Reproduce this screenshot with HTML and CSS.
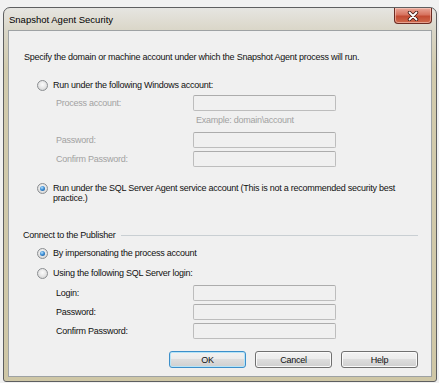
FILE: index.html
```html
<!DOCTYPE html>
<html lang="en">

<head>
    <meta charset="utf-8">
    <title>Snapshot Agent Security</title>
    <link rel="stylesheet" href="styles.css">
</head>

<body>

    <div class="window">
        <div class="titlebar">
            <span class="title">Snapshot Agent Security</span>
            <button class="close" aria-label="Close">
                <svg width="12" height="10" viewBox="0 0 12 10">
                    <path d="M2.5 1.5 L9.5 8.5 M9.5 1.5 L2.5 8.5" stroke="#3b1510" stroke-width="3.4" stroke-linecap="round" />
                    <path d="M2.5 1.5 L9.5 8.5 M9.5 1.5 L2.5 8.5" stroke="#ffffff" stroke-width="1.8" stroke-linecap="round" />
                </svg>
            </button>
        </div>

        <div class="client">
            <p class="intro">Specify the domain or machine account under which the Snapshot Agent process will run.</p>

            <div class="option first">
                <span class="radio"></span>
                <span class="label">Run under the following Windows account:</span>
            </div>

            <div class="fields disabled">
                <span>Process account:</span><span class="box"></span>
                <span class="hint">Example: domain\account</span>
                <span>Password:</span><span class="box"></span>
                <span>Confirm Password:</span><span class="box"></span>
            </div>

            <div class="option wrap">
                <span class="radio on"></span>
                <span class="label">Run under the SQL Server Agent service account (This is not a recommended security best practice.)</span>
            </div>

            <div class="group">
                <span>Connect to the Publisher</span>
                <span class="rule"></span>
            </div>

            <div class="option imp">
                <span class="radio on"></span>
                <span class="label">By impersonating the process account</span>
            </div>

            <div class="option login">
                <span class="radio"></span>
                <span class="label">Using the following SQL Server login:</span>
            </div>

            <div class="fields second">
                <span>Login:</span><span class="box"></span>
                <span>Password:</span><span class="box"></span>
                <span>Confirm Password:</span><span class="box"></span>
            </div>

            <div class="buttons">
                <button class="btn default">OK</button>
                <button class="btn">Cancel</button>
                <button class="btn">Help</button>
            </div>
        </div>
    </div>

</body>

</html>
```

FILE: styles.css
```css
* {
    box-sizing: border-box;
}

body {
    margin: 0;
    height: 383px;
    overflow: hidden;
    background-color: #f1f1f1;
    font-family: "Liberation Sans", sans-serif;
    font-size: 9px;
    letter-spacing: -0.25px;
    color: #111;
}

.window {
    margin: 7px 0 0 3px;
    width: 434px;
    height: 375px;
    border: 1px solid #5e5f60;
    border-radius: 7px 7px 3px 3px;
    padding: 0 4px 4px 4px;
    background: linear-gradient(to bottom, #e6e5e1 0, #d9d5c6 24px, #d2cbad 60px, #cfc7a6 100%);
    display: flex;
    flex-direction: column;
}

.titlebar {
    height: 22px;
    display: flex;
    align-items: flex-start;
}

.title {
    font-size: 9.5px;
    letter-spacing: 0;
    color: #000;
    padding: 6px 0 0 1px;
}

.close {
    margin-left: auto;
    width: 38px;
    height: 16px;
    padding: 0;
    border: 1px solid #6b2b22;
    border-top: none;
    border-radius: 0 0 4px 4px;
    background: linear-gradient(to bottom, #e9a697 0, #d7735f 45%, #c34b33 55%, #cf6a4c 100%);
    box-shadow: inset 0 0 0 1px rgba(255, 220, 210, 0.5);
    display: flex;
    align-items: center;
    justify-content: center;
}

.client {
    flex: 1;
    border: 1px solid #9ea2a4;
    background-color: #f0f0f0;
    padding: 0 13px 0 0;
}

.intro {
    margin: 20px 0 0 15px;
    line-height: 12px;
}

.option {
    display: flex;
    align-items: center;
    gap: 5px;
    padding-left: 28px;
    line-height: 12px;
}

.option.first {
    margin-top: 16px;
}

.option.wrap {
    margin-top: 16px;
    align-items: flex-start;
    line-height: 10px;
}

.option.imp {
    margin-top: 6px;
}

.option.login {
    margin-top: 8px;
}

.radio {
    flex: none;
    width: 11px;
    height: 11px;
    border: 1px solid #8b8e91;
    border-radius: 50%;
    background: radial-gradient(circle at 50% 40%, #fbfbfb 0, #e4e4e4 55%, #c9c9c9 100%);
    display: flex;
    align-items: center;
    justify-content: center;
}

.radio.on::after {
    content: "";
    width: 5px;
    height: 5px;
    border-radius: 50%;
    background: radial-gradient(circle at 40% 35%, #b9e3ff 0, #3d8fd6 45%, #0f4c8c 100%);
}

.fields {
    display: grid;
    grid-template-columns: 137px 143px;
    grid-auto-rows: 16px;
    row-gap: 3px;
    padding-left: 47px;
    margin-top: 4px;
}

.fields span {
    line-height: 16px;
}

.disabled {
    grid-template-rows: 16px 15px 16px 16px;
}

.disabled span {
    color: #a2a2a2;
}

.fields .hint {
    grid-column: 2;
    line-height: 12px;
    padding-left: 3px;
}

.fields.second {
    margin-top: 6px;
}

.box {
    height: 16px;
    border: 1px solid #bdbdbd;
    border-top-color: #acacac;
    border-radius: 2px;
    background-color: #f0f0f0;
}

.group {
    margin: 26px 0 0 14px;
    display: flex;
    align-items: center;
    gap: 5px;
    line-height: 12px;
}

.rule {
    flex: 1;
    height: 1px;
    background-color: #c9cfd3;
}

.buttons {
    margin-top: 12px;
    display: flex;
    justify-content: flex-end;
    gap: 9px;
}

.btn {
    width: 77px;
    height: 17px;
    padding: 0;
    border: 1px solid #707070;
    border-radius: 3px;
    background: linear-gradient(to bottom, #f2f2f2 0, #ebebeb 49%, #dddddd 50%, #cfcfcf 100%);
    box-shadow: inset 0 0 0 1px #fafafa;
    font-family: "Liberation Sans", sans-serif;
    font-size: 9px;
    letter-spacing: -0.25px;
    color: #111;
}

.btn.default {
    border-color: #3c8fca;
    box-shadow: inset 0 0 0 1px #b6e4f7;
}
```
